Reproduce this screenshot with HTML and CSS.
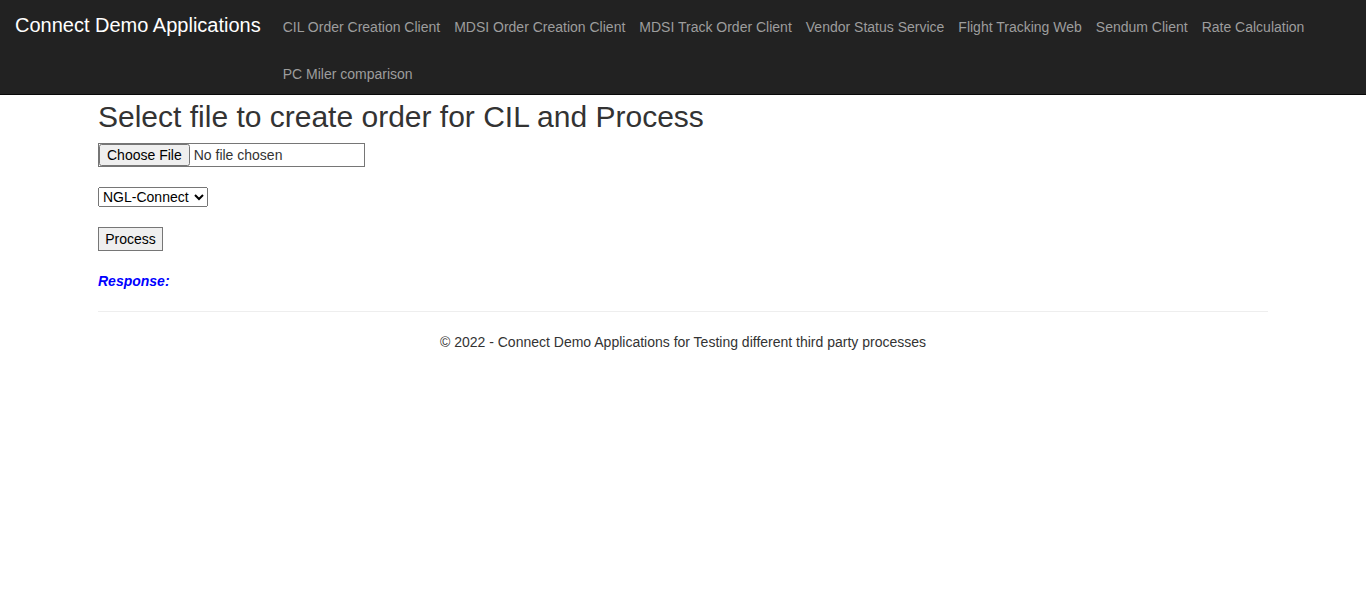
FILE: index.html
```html
<!DOCTYPE html>
<html lang="en">
<head>
<meta charset="utf-8">
<title>Connect Demo Applications</title>
<link rel="stylesheet" href="styles.css">
</head>
<body>
<header class="navbar">
  <a class="brand" href="#">Connect Demo Applications</a>
  <ul class="nav">
    <li><a href="#">CIL Order Creation Client</a></li>
    <li><a href="#">MDSI Order Creation Client</a></li>
    <li><a href="#">MDSI Track Order Client</a></li>
    <li><a href="#">Vendor Status Service</a></li>
    <li><a href="#">Flight Tracking Web</a></li>
    <li><a href="#">Sendum Client</a></li>
    <li><a href="#">Rate Calculation</a></li>
    <li><a href="#">PC Miler comparison</a></li>
  </ul>
</header>
<main class="container">
  <h2 class="title">Select file to create order for CIL and Process</h2>
  <form class="upload-form">
    <div class="field"><input class="file-input" type="file"></div>
    <div class="field">
      <select class="select">
        <option>NGL-Connect</option>
      </select>
    </div>
    <div class="field"><button class="btn" type="button">Process</button></div>
    <div class="response">Response:</div>
  </form>
  <hr class="divider">
  <footer class="footer">
    <p>&copy; 2022 - Connect Demo Applications for Testing different third party processes</p>
  </footer>
</main>
</body>
</html>
```
FILE: styles.css
```css
* { box-sizing: border-box; }
html, body { margin: 0; padding: 0; }
body {
  font-family: "Liberation Sans", Arial, Helvetica, sans-serif;
  font-size: 14px;
  line-height: 20px;
  color: #333;
  background: #fff;
}
.navbar {
  display: flex;
  align-items: flex-start;
  background: #222;
  border-bottom: 1px solid #080808;
  padding: 0 15px;
  height: 95px;
}
.brand {
  flex: none;
  color: #fff;
  text-decoration: none;
  font-size: 20px;
  line-height: 20px;
  padding-top: 15px;
}
.nav {
  list-style: none;
  margin: 0 0 0 15px;
  padding: 7px 0 0 0;
  display: flex;
  flex-wrap: wrap;
  row-gap: 7px;
  flex: 1;
}
.nav a {
  display: block;
  color: #9d9d9d;
  text-decoration: none;
  padding: 10px 7px;
  line-height: 20px;
}
.container {
  width: 1170px;
  margin: 0 auto;
}
.title {
  font-size: 30px;
  line-height: 33px;
  font-weight: 500;
  margin: 5px 0 10px;
}
.field { margin-bottom: 20px; line-height: 0; }
.file-input {
  font: inherit;
  font-size: 14px;
  line-height: normal;
  width: 267px;
  height: 24px;
  border: 1px solid #767676;
  padding: 0;
  color: #333;
}
.select {
  font: inherit;
  font-size: 14px;
  line-height: normal;
  height: 20px;
  width: 110px;
  color: #000;
}
.btn {
  font: inherit;
  font-size: 14px;
  line-height: normal;
  height: 24px;
  width: 65px;
  padding: 1px 6px;
  color: #000;
  background: #efefef;
  border: 1px solid #767676;
  border-radius: 0;
}
.response {
  color: #0000ff;
  font-weight: bold;
  font-style: italic;
}
.divider {
  margin: 20px 0;
  border: 0;
  border-top: 1px solid #eee;
}
.footer p {
  margin: 0;
  text-align: center;
}
```
